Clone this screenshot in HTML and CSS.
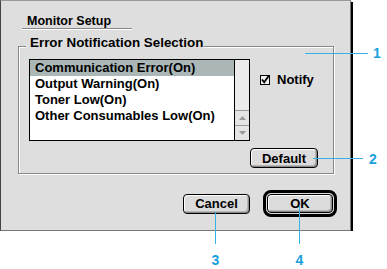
FILE: index.html
```html
<!DOCTYPE html>
<html>
<head>
    <title>Monitor Setup</title>
    <link rel="stylesheet" href="styles.css">
</head>
<body>
    <div class="window">
        <div class="title">Monitor Setup</div>

        <div class="group">
            <span class="group-title">Error Notification Selection</span>
            <div class="group-body">
                <div class="list">
                    <ul class="items">
                        <li class="sel">Communication Error(On)</li>
                        <li>Output Warning(On)</li>
                        <li>Toner Low(On)</li>
                        <li>Other Consumables Low(On)</li>
                    </ul>
                    <div class="scrollbar">
                        <div class="track"></div>
                        <div class="arrow">
                            <svg width="7" height="4" viewBox="0 0 7 4"><path d="M3.5 0 L7 4 L0 4 Z" fill="#999"/></svg>
                        </div>
                        <div class="arrow">
                            <svg width="7" height="4" viewBox="0 0 7 4"><path d="M0 0 L7 0 L3.5 4 Z" fill="#999"/></svg>
                        </div>
                    </div>
                </div>
                <label class="notify">
                    <span class="check">
                        <svg width="10" height="10" viewBox="0 0 10 10">
                            <path d="M2 4.5 L4.2 7.2 L9 0.5" fill="none" stroke="#000" stroke-width="1.8"/>
                        </svg>
                    </span>
                    Notify
                </label>
            </div>
            <div class="group-foot">
                <button class="btn btn-default">Default</button>
            </div>
        </div>

        <div class="footer">
            <button class="btn btn-cancel">Cancel</button>
            <div class="ring"><button class="btn btn-ok">OK</button></div>
        </div>
    </div>

    <!-- callout annotations -->
    <svg class="callouts" width="387" height="269" viewBox="0 0 387 269">
        <g stroke="#36b2e6" stroke-width="1">
            <line x1="305" y1="53.5" x2="368" y2="53.5"/>
            <line x1="313" y1="158.5" x2="363" y2="158.5"/>
            <line x1="215.5" y1="212" x2="215.5" y2="244"/>
            <line x1="299.5" y1="205" x2="299.5" y2="244"/>
        </g>
        <g class="num">
            <text x="377" y="58">1</text>
            <text x="373" y="164">2</text>
            <text x="215.5" y="265">3</text>
            <text x="299.5" y="265">4</text>
        </g>
    </svg>
</body>
</html>
```

FILE: styles.css
```css
body {
    margin: 0;
    background-color: #fff;
    font-family: "Liberation Sans", Arial, sans-serif;
    font-weight: bold;
    font-size: 13px;
    color: #000;
}

.window {
    box-sizing: border-box;
    width: 351px;
    height: 231px;
    background-color: #dedede;
    border: 1px solid #777;
    border-top-color: #9a9a9a;
    border-left-color: #444;
    box-shadow: 2px 2px 0 #000;
}

.title {
    margin: 12px 0 0 21px;
    width: 110px;
    height: 16px;
    line-height: 16px;
    padding-left: 5px;
    box-sizing: border-box;
    font-size: 12.5px;
    border-bottom: 1px solid #888;
    box-shadow: 0 1px 0 #fff;
}

/* Group box */
.group {
    position: relative;
    box-sizing: border-box;
    margin: 17px 0 0 17px;
    width: 316px;
    height: 128px;
    border: 1px solid #888;
    box-shadow: 1px 1px 0 #fff, inset 1px 1px 0 #fff;
}

.group-title {
    position: absolute;
    top: -11px;
    left: 7px;
    padding: 0 1px 0 4px;
    font-size: 13.4px;
    line-height: 14px;
    background-color: #dedede;
}

.group-body {
    display: flex;
    align-items: flex-start;
    padding: 12px 0 0 10px;
}

.list {
    display: flex;
    box-sizing: border-box;
    width: 221px;
    height: 82px;
    border: 1px solid #000;
    background-color: #fff;
}

.items {
    flex: 1;
    margin: 0;
    padding: 0;
    list-style: none;
}

.items li {
    height: 16px;
    line-height: 16px;
    padding-left: 5px;
    white-space: nowrap;
}

.items li.sel {
    background-color: #aab7b6;
}

.scrollbar {
    display: flex;
    flex-direction: column;
    width: 15px;
    box-sizing: border-box;
    border-left: 1px solid #000;
    background-color: #ececec;
}

.track {
    flex: 1;
}

.arrow {
    height: 14px;
    border-top: 1px solid #999;
    display: flex;
    align-items: center;
    justify-content: center;
    background-color: #e4e4e4;
}

.notify {
    display: flex;
    align-items: center;
    gap: 7px;
    margin: 15px 0 0 10px;
    line-height: 12px;
}

.check {
    display: block;
    width: 10px;
    height: 10px;
    box-sizing: border-box;
    border: 1px solid #000;
    background-color: #eee;
    overflow: visible;
}

.check svg {
    display: block;
    margin: -1px 0 0 -1px;
}

.group-foot {
    display: flex;
    justify-content: flex-end;
    margin-top: 7px;
    padding-right: 15px;
}

/* Buttons */
.btn {
    box-sizing: border-box;
    height: 20px;
    padding: 0;
    border: 1px solid #000;
    border-radius: 4px;
    background-color: #dcdcdc;
    box-shadow: inset 1px 1px 0 #fff, inset -1px -1px 0 #8a8a8a, inset -2px -2px 0 #b4b4b4;
    font-family: inherit;
    font-weight: bold;
    font-size: 13px;
    color: #000;
}

.btn-default {
    width: 68px;
}

.btn-cancel {
    width: 67px;
}

.footer {
    display: flex;
    align-items: center;
    justify-content: flex-end;
    gap: 13px;
    margin-top: 16px;
    padding-right: 13px;
}

.ring {
    box-sizing: border-box;
    width: 74px;
    height: 27px;
    padding: 1px;
    border: 3px solid #000;
    border-radius: 8px;
}

.btn-ok {
    display: block;
    width: 100%;
    height: 19px;
}

.callouts {
    position: absolute;
    top: 0;
    left: 0;
    pointer-events: none;
}

.num text {
    fill: #1a9fdd;
    font-family: "Liberation Sans", Arial, sans-serif;
    font-weight: bold;
    font-size: 14px;
    text-anchor: middle;
}
```
